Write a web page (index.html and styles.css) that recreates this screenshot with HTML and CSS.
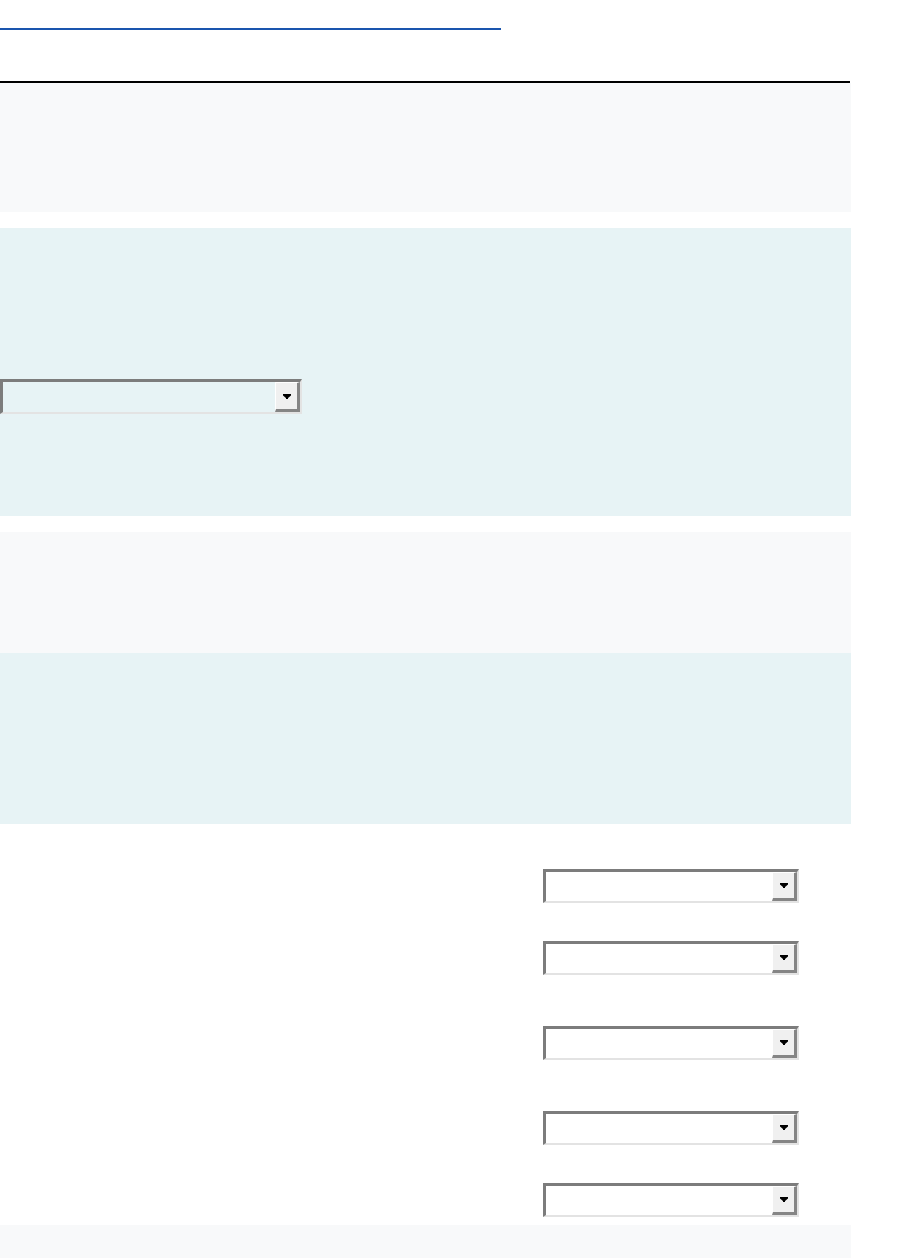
FILE: index.html
```html
<!DOCTYPE html>
<html lang="en">
<head>
    <meta charset="UTF-8">
    <meta name="viewport" content="width=device-width, initial-scale=1.0">
    <title>Settings</title>
    <link rel="stylesheet" href="styles.css">
</head>
<body>
    <header class="page-header">
        <a class="header-link" href="#"></a>
    </header>
    <hr class="header-rule">

    <section class="panel panel-grey panel-intro"></section>

    <section class="panel panel-blue panel-choice">
        <div class="select wide">
            <div class="select-value"></div>
            <div class="select-button">
                <svg width="8" height="5" viewBox="0 0 8 5"><path d="M0 0H8V1.5L5 4V5H3V4L0 1.5Z" fill="#000"/></svg>
            </div>
        </div>
    </section>

    <section class="panel panel-grey panel-notes"></section>
    <section class="panel panel-blue panel-info"></section>

    <section class="form-section">
        <div class="field">
            <span class="field-label"></span>
            <div class="select">
                <div class="select-value"></div>
                <div class="select-button">
                    <svg width="8" height="5" viewBox="0 0 8 5"><path d="M0 0H8V1.5L5 4V5H3V4L0 1.5Z" fill="#000"/></svg>
                </div>
            </div>
        </div>
        <div class="field tall">
            <span class="field-label"></span>
            <div class="select">
                <div class="select-value"></div>
                <div class="select-button">
                    <svg width="8" height="5" viewBox="0 0 8 5"><path d="M0 0H8V1.5L5 4V5H3V4L0 1.5Z" fill="#000"/></svg>
                </div>
            </div>
        </div>
        <div class="field tall">
            <span class="field-label"></span>
            <div class="select">
                <div class="select-value"></div>
                <div class="select-button">
                    <svg width="8" height="5" viewBox="0 0 8 5"><path d="M0 0H8V1.5L5 4V5H3V4L0 1.5Z" fill="#000"/></svg>
                </div>
            </div>
        </div>
        <div class="field">
            <span class="field-label"></span>
            <div class="select">
                <div class="select-value"></div>
                <div class="select-button">
                    <svg width="8" height="5" viewBox="0 0 8 5"><path d="M0 0H8V1.5L5 4V5H3V4L0 1.5Z" fill="#000"/></svg>
                </div>
            </div>
        </div>
        <div class="field last">
            <span class="field-label"></span>
            <div class="select">
                <div class="select-value"></div>
                <div class="select-button">
                    <svg width="8" height="5" viewBox="0 0 8 5"><path d="M0 0H8V1.5L5 4V5H3V4L0 1.5Z" fill="#000"/></svg>
                </div>
            </div>
        </div>
    </section>

    <section class="panel panel-grey panel-footer"></section>
</body>
</html>
```

FILE: styles.css
```css
body {
    font-family: "Liberation Sans", Arial, sans-serif;
    margin: 0;
    padding: 0;
    background: #fff;
    width: 851px;
}

.page-header {
    height: 81px;
    padding-top: 28px;
    box-sizing: border-box;
}

.header-link {
    display: block;
    width: 501px;
    border-bottom: 2px solid #1a55ae;
}

.header-rule {
    margin: 0;
    border: 0;
    width: 850px;
    height: 2px;
    background: #000;
}

.panel {
    box-sizing: border-box;
}

.panel-grey {
    background: #f8f9fa;
}

.panel-blue {
    background: #e7f3f5;
}

.panel-intro {
    height: 129px;
    margin-bottom: 16px;
}

.panel-choice {
    height: 288px;
    padding-top: 151px;
    margin-bottom: 16px;
}

.panel-notes {
    height: 121px;
}

.panel-info {
    height: 171px;
}

.panel-footer {
    height: 40px;
}

.form-section {
    padding: 45px 0 8px;
}

.field {
    display: grid;
    grid-template-columns: 543px 256px;
    margin-bottom: 38px;
}

.field.tall {
    margin-bottom: 51px;
}

.field.last {
    margin-bottom: 0;
}

.select {
    display: flex;
    box-sizing: border-box;
    height: 34px;
    border-top: 3px solid #7c7c7c;
    border-left: 3px solid #7c7c7c;
    border-right: 2px solid #e3e3e3;
    border-bottom: 2px solid #e3e3e3;
}

.select.wide {
    width: 302px;
    height: 35px;
}

.select-value {
    flex-grow: 1;
}

.select-button {
    width: 25px;
    box-sizing: border-box;
    display: flex;
    align-items: center;
    justify-content: center;
    background: #f0f0f0;
    border-top: 1px solid #fff;
    border-left: 1px solid #fff;
    border-right: 3px solid #858585;
    border-bottom: 3px solid #858585;
}

.select-button svg {
    display: block;
}
```
